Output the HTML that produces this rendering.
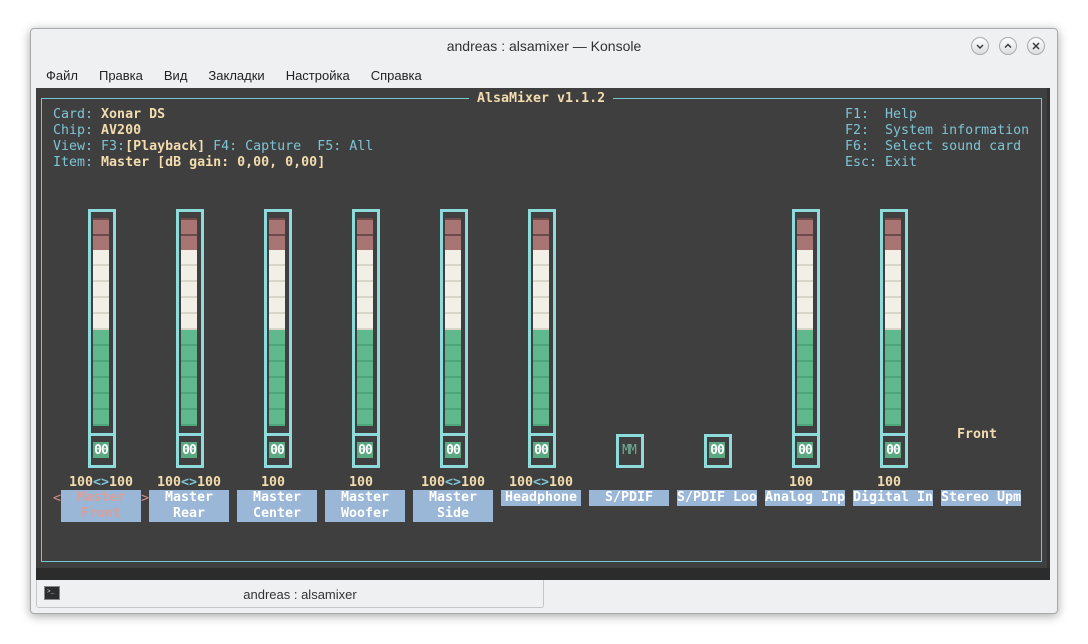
<!DOCTYPE html>
<html><head><meta charset="utf-8"><style>
body{margin:0;width:1088px;height:644px;background:#fff;position:relative;overflow:hidden;font-family:"Liberation Sans",sans-serif}
.a{position:absolute}
.win{left:30px;top:28px;width:1028px;height:586px;background:#eff0f1;border:1px solid #a8a9aa;border-radius:4px;box-sizing:border-box;box-shadow:0 2px 10px rgba(0,0,0,.35)}
.term{left:36px;top:88px;width:1014px;height:480px;background:#3f3f3f}
.t{position:absolute;font-family:"DejaVu Sans Mono","Liberation Mono",monospace;font-size:13.3px;line-height:16px;white-space:pre;color:#7ec4d6}
.b{font-weight:bold;color:#f3dcae}
.fr{position:absolute;top:209px;width:28px;height:259px;border:3px solid #8edbdb;box-sizing:border-box}
.sep{position:absolute;left:0;right:0;top:221px;height:3px;background:#8edbdb}
.bar{position:absolute;left:2px;width:16px}
.r{top:6px;height:32px;background:repeating-linear-gradient(#6e4b4b 0 2px,#a87474 2px 16px)}
.w{top:38px;height:80px;background:repeating-linear-gradient(#f1efe6 0 14px,#d8d6c8 14px 16px)}
.g{top:118px;height:96px;background:repeating-linear-gradient(#5fb98d 0 14px,#4ea57c 14px 16px)}
.z{position:absolute;left:2px;top:230px;width:16px;height:16px;background:#5aa982;color:#fff;font-family:"DejaVu Sans Mono","Liberation Mono",monospace;font-weight:bold;font-size:13px;line-height:17px;text-align:center;letter-spacing:-1px}
.lb{position:absolute;top:490px;width:80px;background:#9ab7d8;color:#fff;font-family:"DejaVu Sans Mono","Liberation Mono",monospace;font-weight:bold;font-size:13.3px;line-height:16px;text-align:center;white-space:pre}
.btn{position:absolute;top:37px;width:18px;height:18px;border-radius:50%;background:linear-gradient(#fdfdfd,#dcdde0);border:1px solid #a9abae;box-sizing:border-box}
</style></head><body>
<div class="a win"></div>
<div class="a" style="left:0;top:38px;width:1088px;text-align:center;font-size:14px;color:#313131">andreas : alsamixer — Konsole</div>
<div class="btn" style="left:971px"><svg width="16" height="16" style="position:absolute;left:0;top:0"><path d="M5 7l3 3 3-3" fill="none" stroke="#333" stroke-width="1.4"/></svg></div>
<div class="btn" style="left:999px"><svg width="16" height="16" style="position:absolute;left:0;top:0"><path d="M5 9.5l3-3 3 3" fill="none" stroke="#333" stroke-width="1.4"/></svg></div>
<div class="btn" style="left:1027px"><svg width="16" height="16" style="position:absolute;left:0;top:0"><path d="M5 5l6 6M11 5l-6 6" fill="none" stroke="#333" stroke-width="1.4"/></svg></div>
<div class="a" style="left:46px;top:68px;font-size:13px;color:#232323">Файл<span style="margin-left:21px">Правка</span><span style="margin-left:21px">Вид</span><span style="margin-left:21px">Закладки</span><span style="margin-left:21px">Настройка</span><span style="margin-left:21px">Справка</span></div>
<div class="a term"></div>
<div class="a" style="left:1047px;top:88px;width:3px;height:480px;background:#333"></div>
<div class="a" style="left:36px;top:568px;width:1014px;height:12px;background:#2c2c2c"></div>
<div class="a" style="left:41px;top:98px;width:1001px;height:464px;border:1px solid #76c7cf;box-sizing:border-box"></div>
<div class="t b" style="left:469px;top:91px;background:#3f3f3f;padding:0 8px">AlsaMixer v1.1.2</div>
<div class="t" style="left:53px;top:107px">Card: <span class="b">Xonar DS</span>
Chip: <span class="b">AV200</span>
View: F3:<span class="b">[Playback]</span> F4: Capture  F5: All
Item: <span class="b">Master [dB gain: 0,00, 0,00]</span></div>
<div class="t" style="left:845px;top:107px">F1:  Help
F2:  System information
F6:  Select sound card
Esc: Exit</div>

<div class="fr" style="left:88px"><div class="bar r"></div><div class="bar w"></div><div class="bar g"></div><div class="sep"></div><div class="z">00</div></div>
<div class="fr" style="left:176px"><div class="bar r"></div><div class="bar w"></div><div class="bar g"></div><div class="sep"></div><div class="z">00</div></div>
<div class="fr" style="left:264px"><div class="bar r"></div><div class="bar w"></div><div class="bar g"></div><div class="sep"></div><div class="z">00</div></div>
<div class="fr" style="left:352px"><div class="bar r"></div><div class="bar w"></div><div class="bar g"></div><div class="sep"></div><div class="z">00</div></div>
<div class="fr" style="left:440px"><div class="bar r"></div><div class="bar w"></div><div class="bar g"></div><div class="sep"></div><div class="z">00</div></div>
<div class="fr" style="left:528px"><div class="bar r"></div><div class="bar w"></div><div class="bar g"></div><div class="sep"></div><div class="z">00</div></div>
<div class="fr" style="left:616px;top:434px;height:34px"><div class="z" style="top:5px;background:none;color:#6eab94;font-weight:normal">MM</div></div>
<div class="fr" style="left:704px;top:434px;height:34px"><div class="z" style="top:5px">00</div></div>
<div class="fr" style="left:792px"><div class="bar r"></div><div class="bar w"></div><div class="bar g"></div><div class="sep"></div><div class="z">00</div></div>
<div class="fr" style="left:880px"><div class="bar r"></div><div class="bar w"></div><div class="bar g"></div><div class="sep"></div><div class="z">00</div></div>
<div class="t b" style="left:957px;top:427px">Front</div>

<div class="t b" style="left:69px;top:475px">100<span style="color:#7ec4d6">&lt;&gt;</span>100</div>
<div class="t b" style="left:157px;top:475px">100<span style="color:#7ec4d6">&lt;&gt;</span>100</div>
<div class="t b" style="left:261px;top:475px">100</div>
<div class="t b" style="left:349px;top:475px">100</div>
<div class="t b" style="left:421px;top:475px">100<span style="color:#7ec4d6">&lt;&gt;</span>100</div>
<div class="t b" style="left:509px;top:475px">100<span style="color:#7ec4d6">&lt;&gt;</span>100</div>
<div class="t b" style="left:789px;top:475px">100</div>
<div class="t b" style="left:877px;top:475px">100</div>

<div class="t" style="left:53px;top:491px;color:#d98f86">&lt;</div>
<div class="t" style="left:141px;top:491px;color:#d98f86">&gt;</div>
<div class="lb" style="left:61px;color:#d9a09a">Master
Front</div>
<div class="lb" style="left:149px">Master
Rear</div>
<div class="lb" style="left:237px">Master
Center</div>
<div class="lb" style="left:325px">Master
Woofer</div>
<div class="lb" style="left:413px">Master
Side</div>
<div class="lb" style="left:501px">Headphone</div>
<div class="lb" style="left:589px">S/PDIF</div>
<div class="lb" style="left:677px">S/PDIF Loo</div>
<div class="lb" style="left:765px">Analog Inp</div>
<div class="lb" style="left:853px">Digital In</div>
<div class="lb" style="left:941px">Stereo Upm</div>

<div class="a" style="left:36px;top:580px;width:508px;height:28px;border:1px solid #c4c6c8;border-top:none;border-radius:0 0 3px 3px;background:#eff0f1;box-sizing:border-box"></div>
<div class="a" style="left:44px;top:586px;width:16px;height:14px;background:#2b2d2f;border:1px solid #888;box-sizing:border-box"><div style="position:absolute;left:2px;top:1px;color:#ddd;font-size:6px;font-family:'Liberation Mono',monospace">&gt;_</div></div>
<div class="a" style="left:36px;top:587px;width:528px;text-align:center;font-size:13px;color:#333">andreas : alsamixer</div>
</body></html>
